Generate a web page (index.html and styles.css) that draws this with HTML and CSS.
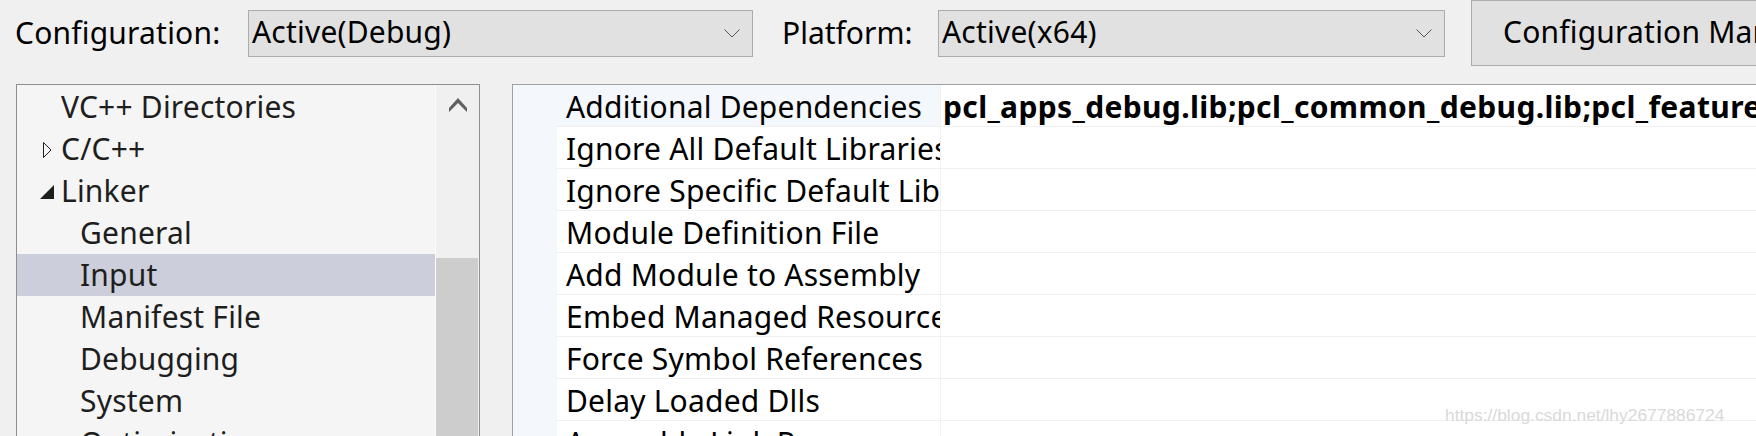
FILE: index.html
```html
<!DOCTYPE html>
<html>
<head>
<meta charset="utf-8">
<title>Property Pages</title>
<link rel="stylesheet" href="styles.css">
</head>
<body>
<div class="toolbar">
  <span class="lbl lbl-config">Configuration:</span>
  <div class="combo combo-config">
    <span class="combo-text">Active(Debug)</span>
    <svg class="chev" width="16" height="9" viewBox="0 0 16 9"><polyline points="0.5,0.5 8,8 15.5,0.5" fill="none" stroke="#555" stroke-width="1"/></svg>
  </div>
  <span class="lbl lbl-platform">Platform:</span>
  <div class="combo combo-platform">
    <span class="combo-text">Active(x64)</span>
    <svg class="chev" width="16" height="9" viewBox="0 0 16 9"><polyline points="0.5,0.5 8,8 15.5,0.5" fill="none" stroke="#555" stroke-width="1"/></svg>
  </div>
  <div class="cfg-btn">Configuration Manager...</div>
</div>

<div class="main">
  <div class="tree">
    <div class="tree-list">
      <div class="node lvl0"><span class="exp"></span><span class="txt">VC++ Directories</span></div>
      <div class="node lvl0"><span class="exp"><svg width="12" height="18" viewBox="0 0 12 18"><polygon points="3.5,1.5 11,9 3.5,16.5" fill="none" stroke="#1e1e1e" stroke-width="1"/></svg></span><span class="txt">C/C++</span></div>
      <div class="node lvl0"><span class="exp"><svg width="15" height="15" viewBox="0 0 15 15"><polygon points="14,0 14,14 0,14" fill="#1e1e1e"/></svg></span><span class="txt">Linker</span></div>
      <div class="node lvl1"><span class="exp"></span><span class="txt">General</span></div>
      <div class="node lvl1 selected"><span class="exp"></span><span class="txt">Input</span></div>
      <div class="node lvl1"><span class="exp"></span><span class="txt">Manifest File</span></div>
      <div class="node lvl1"><span class="exp"></span><span class="txt">Debugging</span></div>
      <div class="node lvl1"><span class="exp"></span><span class="txt">System</span></div>
      <div class="node lvl1"><span class="exp"></span><span class="txt">Optimization</span></div>
    </div>
    <div class="vscroll">
      <div class="sb-arrow"><svg width="20" height="16" viewBox="0 0 20 16"><polygon points="10,1 19,11 19,15 10,6 1,15 1,11" fill="#606060"/></svg></div>
      <div class="sb-thumb"></div>
    </div>
  </div>

  <div class="grid">
    <div class="gutter"></div>
    <div class="rows">
      <div class="row current"><div class="name">Additional Dependencies</div><div class="value bold">pcl_apps_debug.lib;pcl_common_debug.lib;pcl_features_debug.lib;pcl_filters_debug.lib</div></div>
      <div class="row"><div class="name">Ignore All Default Libraries</div><div class="value"></div></div>
      <div class="row"><div class="name">Ignore Specific Default Libraries</div><div class="value"></div></div>
      <div class="row"><div class="name">Module Definition File</div><div class="value"></div></div>
      <div class="row"><div class="name">Add Module to Assembly</div><div class="value"></div></div>
      <div class="row"><div class="name">Embed Managed Resource File</div><div class="value"></div></div>
      <div class="row"><div class="name">Force Symbol References</div><div class="value"></div></div>
      <div class="row"><div class="name">Delay Loaded Dlls</div><div class="value"></div></div>
      <div class="row"><div class="name">Assembly Link Resource</div><div class="value"></div></div>
    </div>
  </div>
</div>

<div class="watermark">https://blog.csdn.net/lhy2677886724</div>
</body>
</html>
```

FILE: styles.css
```css
html, body {
  margin: 0;
  padding: 0;
}
body {
  width: 1756px;
  height: 436px;
  overflow: hidden;
  background: #f0f0f0;
  font-family: "Noto Sans", "Open Sans", sans-serif;
  font-size: 30px;
  letter-spacing: 0.2px;
  color: #000;
  position: relative;
}

/* ---------- toolbar ---------- */
.toolbar {
  display: flex;
  align-items: center;
  height: 66px;
  padding-left: 15px;
  white-space: nowrap;
}
.lbl {
  display: block;
  line-height: 40px;
  flex: none;
}
.lbl-config { width: 233px; }
.lbl-platform { width: 156px; margin-left: 29px; letter-spacing: 0; }

.combo {
  flex: none;
  box-sizing: border-box;
  height: 47px;
  background: #e1e1e1;
  border: 1px solid #acacac;
  display: flex;
  align-items: center;
  justify-content: space-between;
  padding: 0 12px 0 3px;
}
.combo-config { width: 505px; }
.combo-platform { width: 507px; }
.combo-text {
  line-height: 40px;
  padding-bottom: 2px;
}
.chev { display: block; }

.cfg-btn {
  flex: none;
  box-sizing: border-box;
  margin-left: 26px;
  width: 420px;
  height: 66px;
  background: #e1e1e1;
  border: 1px solid #adadad;
  padding-left: 31px;
  line-height: 62px;
}

/* ---------- main ---------- */
.main {
  display: flex;
  align-items: flex-start;
  margin-top: 18px;
}

.tree {
  flex: none;
  box-sizing: border-box;
  margin-left: 16px;
  width: 464px;
  height: 380px;
  border: 1px solid #8f8f8f;
  border-bottom: none;
  background: #f5f5f5;
  display: flex;
}
.tree-list {
  width: 418px;
  padding-top: 1px;
  color: #1e1e1e;
}
.node {
  display: flex;
  align-items: center;
  height: 42px;
  white-space: nowrap;
}
.node .txt {
  line-height: 42px;
  padding-bottom: 1px;
}
.lvl0 { padding-left: 23px; }
.lvl1 { padding-left: 42px; }
.exp {
  flex: none;
  width: 21px;
  height: 42px;
  display: flex;
  align-items: center;
}
.exp svg { display: block; margin-top: 2px; }
.node.selected { background: #cccedb; }

.vscroll {
  width: 43px;
  border-left: 1px solid #fbfbfb;
  background: #f0f0f0;
}
.sb-arrow {
  height: 42px;
  display: flex;
  justify-content: center;
  align-items: center;
}
.sb-arrow svg { display: block; margin-top: -2px; }
.sb-thumb {
  margin-top: 131px;
  height: 200px;
  background: #cdcdcd;
  margin-right: 1px;
}

.grid {
  flex: none;
  box-sizing: border-box;
  margin-left: 32px;
  width: 1300px;
  height: 380px;
  border-top: 1px solid #a0a0a0;
  border-left: 1px solid #a0a0a0;
  background: #fff;
  display: flex;
}
.gutter {
  width: 44px;
  background: #f4f7fc;
}
.rows { flex: 1; }
.row {
  box-sizing: border-box;
  height: 42px;
  display: grid;
  grid-template-columns: 384px 1fr;
  border-bottom: 1px solid #f0f0f0;
}
.name {
  box-sizing: border-box;
  padding-left: 9px;
  padding-top: 3px;
  overflow: hidden;
  white-space: nowrap;
  line-height: 38px;
  border-right: 1px solid #f0f0f0;
}
.row.current .name { background: #f4f7fc; }
.value {
  padding-left: 2px;
  padding-top: 3px;
  overflow: hidden;
  white-space: nowrap;
  line-height: 38px;
}
.value.bold { font-weight: 700; letter-spacing: 0.35px; }

.watermark {
  position: absolute;
  left: 1445px;
  top: 406px;
  font-family: "Liberation Sans", Arial, sans-serif;
  font-size: 17.4px;
  line-height: 18px;
  letter-spacing: 0;
  color: #d9d9d9;
  white-space: nowrap;
}
```
